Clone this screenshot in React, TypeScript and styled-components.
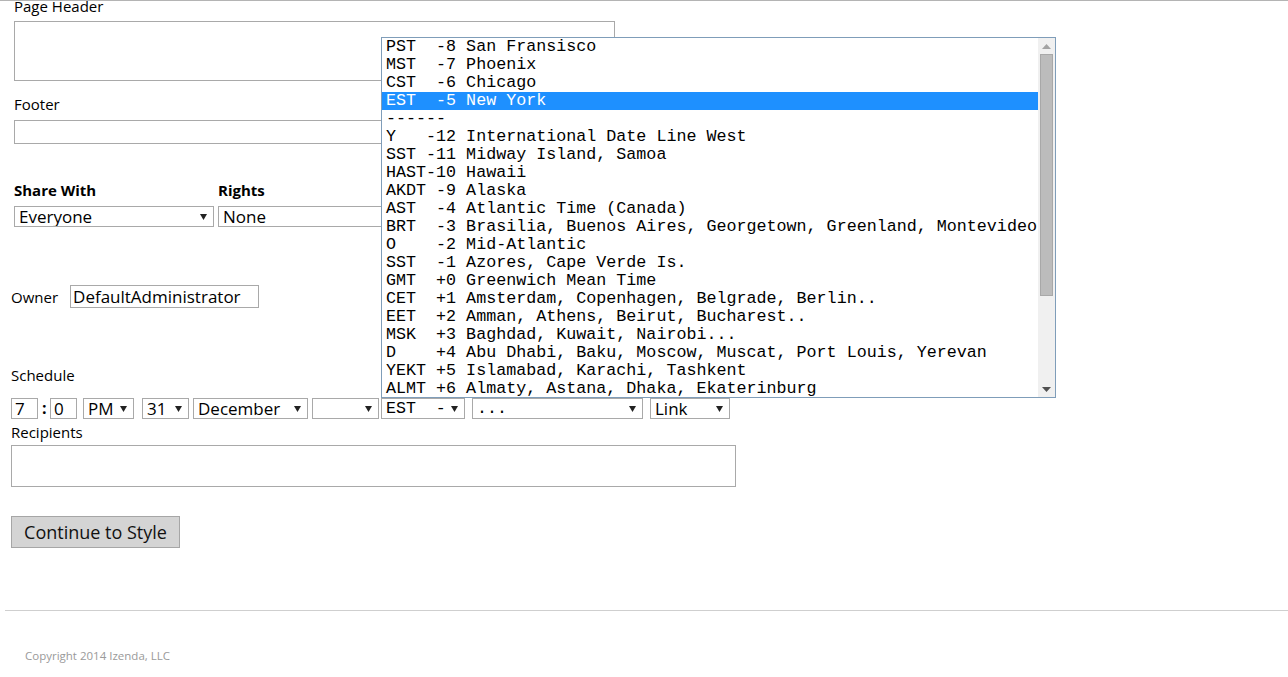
import React from 'react';
import styled, { createGlobalStyle } from 'styled-components';

const GlobalStyle = createGlobalStyle`
  html, body {
    margin: 0;
    padding: 0;
    background: #fff;
    font-family: "Open Sans", "Noto Sans", sans-serif;
    color: #000;
  }
  * { box-sizing: border-box; }
`;

const Page = styled.div`
  position: relative;
  border-top: 1px solid #b4b4b4;
  min-height: 677px;
  overflow: hidden;
`;

const Section = styled.div<{ $left: number }>`
  padding-left: ${({ $left }) => $left}px;
  display: flex;
  flex-direction: column;
  align-items: flex-start;
`;

const Label = styled.div<{ $bold?: boolean; $size?: number; $h?: number }>`
  font-size: ${({ $size }) => $size ?? 15}px;
  font-weight: ${({ $bold }) => ($bold ? 700 : 400)};
  line-height: 20px;
  height: ${({ $h }) => $h ?? 20}px;
  white-space: nowrap;
`;

const HeaderLabel = styled(Label)`
  margin-top: -5px;
`;

const TextArea = styled.div<{ $w: number; $h: number }>`
  width: ${({ $w }) => $w}px;
  height: ${({ $h }) => $h}px;
  border: 1px solid #a9a9a9;
  background: #fff;
`;

const TextInput = styled.div<{ $w: number; $h: number }>`
  width: ${({ $w }) => $w}px;
  height: ${({ $h }) => $h}px;
  border: 1px solid #a9a9a9;
  background: #fff;
  font-size: 17px;
  line-height: ${({ $h }) => $h - 2}px;
  padding-left: 2px;
  white-space: nowrap;
  overflow: hidden;
`;

const Row = styled.div`
  display: flex;
  align-items: flex-start;
`;

const Column = styled.div<{ $w: number }>`
  width: ${({ $w }) => $w}px;
  display: flex;
  flex-direction: column;
`;

const SelectBox = styled.div<{ $w: number; $mono?: boolean; $gap?: number }>`
  width: ${({ $w }) => $w}px;
  height: 21px;
  margin-left: ${({ $gap }) => $gap ?? 0}px;
  border: 1px solid #a9a9a9;
  background: #fff;
  display: flex;
  align-items: center;
  justify-content: space-between;
  padding: 0 6px 0 4px;
  font-family: ${({ $mono }) =>
    $mono ? '"Liberation Mono", "Courier New", monospace' : '"Open Sans", "Noto Sans", sans-serif'};
  font-size: ${({ $mono }) => ($mono ? '16.6px' : '17px')};
  white-space: pre;
  overflow: hidden;
`;

const Arrow = () => (
  <svg width="7" height="6" viewBox="0 0 7 6">
    <path d="M0 0 H7 L3.5 6 Z" fill="#222" />
  </svg>
);

const Select: React.FC<{ w: number; text?: string; mono?: boolean; gap?: number }> = ({ w, text, mono, gap }) => (
  <SelectBox $w={w} $mono={mono} $gap={gap}>
    <span>{text ?? ''}</span>
    <Arrow />
  </SelectBox>
);

const SmallInput = styled(TextInput)<{ $gap?: number }>`
  margin-left: ${({ $gap }) => $gap ?? 0}px;
  padding-left: 3px;
  line-height: 19px;
`;

const Colon = styled.span`
  margin-left: 4px;
  font-size: 16px;
  font-weight: 700;
  line-height: 21px;
  width: 8px;
`;

const OwnerRow = styled.div`
  display: flex;
  align-items: center;
  gap: 12px;
`;

const Button = styled.div`
  width: 169px;
  height: 32px;
  background: #d4d4d4;
  border: 1px solid #a6a6a6;
  font-size: 18px;
  line-height: 30px;
  text-align: center;
  color: #111;
`;

const Rule = styled.div`
  margin-left: 5px;
  border-top: 1px solid #cfcfcf;
`;

const Copyright = styled.div`
  padding-left: 25px;
  font-size: 11.5px;
  color: #9a9a9a;
  line-height: 16px;
`;

const Listbox = styled.div`
  position: absolute;
  left: 381px;
  top: 36px;
  width: 675px;
  height: 361px;
  border: 1px solid #7f9db9;
  background: #fff;
  display: flex;
`;

const Options = styled.div`
  flex: 1;
  display: flex;
  flex-direction: column;
  overflow: hidden;
`;

const Option = styled.div<{ $selected?: boolean }>`
  height: 18px;
  line-height: 18px;
  padding-left: 4px;
  font-family: "Liberation Mono", "Courier New", monospace;
  font-size: 16.7px;
  white-space: pre;
  background: ${({ $selected }) => ($selected ? '#1e90ff' : 'transparent')};
  color: ${({ $selected }) => ($selected ? '#fff' : '#000')};
`;

const Scrollbar = styled.div`
  width: 17px;
  background: #f0f0f0;
  display: flex;
  flex-direction: column;
  align-items: center;
`;

const ScrollButton = styled.div`
  height: 16px;
  width: 17px;
  display: flex;
  align-items: center;
  justify-content: center;
`;

const Thumb = styled.div`
  width: 13px;
  height: 242px;
  background: #bcbcbc;
  border: 1px solid #a8a8a8;
`;

const ScrollSpace = styled.div`
  flex: 1;
`;

const Spacer = styled.div<{ $h: number }>`
  height: ${({ $h }) => $h}px;
`;

const zones = [
  'PST  -8 San Fransisco',
  'MST  -7 Phoenix',
  'CST  -6 Chicago',
  'EST  -5 New York',
  '------',
  'Y   -12 International Date Line West',
  'SST -11 Midway Island, Samoa',
  'HAST-10 Hawaii',
  'AKDT -9 Alaska',
  'AST  -4 Atlantic Time (Canada)',
  'BRT  -3 Brasilia, Buenos Aires, Georgetown, Greenland, Montevideo',
  'O    -2 Mid-Atlantic',
  'SST  -1 Azores, Cape Verde Is.',
  'GMT  +0 Greenwich Mean Time',
  'CET  +1 Amsterdam, Copenhagen, Belgrade, Berlin..',
  'EET  +2 Amman, Athens, Beirut, Bucharest..',
  'MSK  +3 Baghdad, Kuwait, Nairobi...',
  'D    +4 Abu Dhabi, Baku, Moscow, Muscat, Port Louis, Yerevan',
  'YEKT +5 Islamabad, Karachi, Tashkent',
  'ALMT +6 Almaty, Astana, Dhaka, Ekaterinburg',
];

export default function App() {
  return (
    <Page>
      <GlobalStyle />
      <Section $left={14}>
        <HeaderLabel $h={25}>Page Header</HeaderLabel>
        <TextArea $w={601} $h={60} />
        <Spacer $h={13} />
        <Label>Footer</Label>
        <Spacer $h={6} />
        <TextInput $w={601} $h={24} />
        <Spacer $h={36} />
        <Row>
          <Column $w={204}>
            <Label $bold>Share With</Label>
            <Spacer $h={6} />
            <Select w={200} text="Everyone" />
          </Column>
          <Column $w={400}>
            <Label $bold>Rights</Label>
            <Spacer $h={6} />
            <Select w={200} text="None" />
          </Column>
        </Row>
      </Section>
      <Spacer $h={58} />
      <Section $left={11}>
        <OwnerRow>
          <Label>Owner</Label>
          <TextInput $w={189} $h={23}>DefaultAdministrator</TextInput>
        </OwnerRow>
        <Spacer $h={57} />
        <Label>Schedule</Label>
        <Spacer $h={13} />
        <Row>
          <SmallInput $w={27} $h={21}>7</SmallInput>
          <Colon>:</Colon>
          <SmallInput $w={27} $h={21}>0</SmallInput>
          <Select w={51} text="PM" gap={6} />
          <Select w={47} text="31" gap={8} />
          <Select w={115} text="December" gap={4} />
          <Select w={67} gap={4} />
          <Select w={84} text="EST  -" mono gap={2} />
          <Select w={171} text="..." mono gap={7} />
          <Select w={80} text="Link" gap={7} />
        </Row>
        <Spacer $h={3} />
        <Label>Recipients</Label>
        <Spacer $h={3} />
        <TextArea $w={725} $h={42} />
        <Spacer $h={29} />
        <Button>Continue to Style</Button>
      </Section>
      <Spacer $h={62} />
      <Rule />
      <Spacer $h={37} />
      <Copyright>Copyright 2014 Izenda, LLC</Copyright>

      <Listbox>
        <Options>
          {zones.map((z, i) => (
            <Option key={i} $selected={i === 3}>
              {z}
            </Option>
          ))}
        </Options>
        <Scrollbar>
          <ScrollButton>
            <svg width="9" height="5" viewBox="0 0 9 5">
              <path d="M0 5 L4.5 0 L9 5 Z" fill="#a3a3a3" />
            </svg>
          </ScrollButton>
          <Thumb />
          <ScrollSpace />
          <ScrollButton>
            <svg width="9" height="5" viewBox="0 0 9 5">
              <path d="M0 0 H9 L4.5 5 Z" fill="#505050" />
            </svg>
          </ScrollButton>
        </Scrollbar>
      </Listbox>
    </Page>
  );
}
